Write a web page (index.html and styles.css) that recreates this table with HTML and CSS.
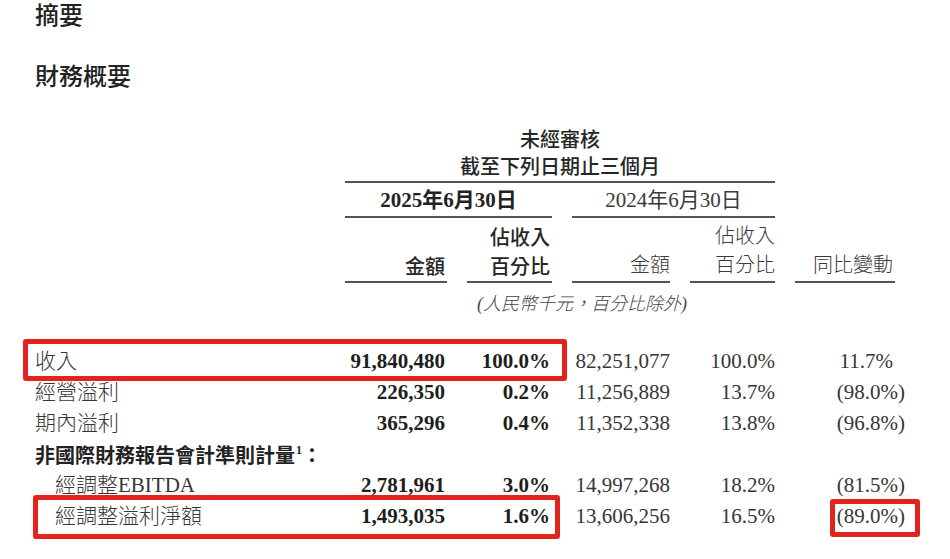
FILE: index.html
```html
<!DOCTYPE html>
<html lang="zh-Hant">
<head>
<meta charset="utf-8">
<title>摘要</title>
<link rel="stylesheet" href="styles.css">
</head>
<body>
<main class="page">
  <h1 class="title">摘要</h1>
  <h2 class="subtitle">財務概要</h2>
  <section class="fin">
    <div class="grid head-top">
      <div class="period">未經審核<br>截至下列日期止三個月</div>
    </div>
    <div class="grid head-date">
      <div class="date cur">2025年6月30日</div>
      <div class="date prev">2024年6月30日</div>
    </div>
    <div class="grid head-cols">
      <div class="blank"></div>
      <div class="hc cur">金額</div>
      <div class="hc cur">佔收入<br>百分比</div>
      <div class="hc prev">金額</div>
      <div class="hc prev">佔收入<br>百分比</div>
      <div class="hc prev yoy-h">同比變動</div>
    </div>
    <div class="grid head-note">
      <div class="note">(人民幣千元，百分比除外)</div>
    </div>
    <div class="body">
      <div class="grid row">
        <div class="label">收入</div>
        <div class="num cur b">91,840,480</div>
        <div class="num cur b">100.0%</div>
        <div class="num">82,251,077</div>
        <div class="num">100.0%</div>
        <div class="num yoy pos">11.7%</div>
        <span class="mark mark-revenue"></span>
      </div>
      <div class="grid row">
        <div class="label">經營溢利</div>
        <div class="num cur b">226,350</div>
        <div class="num cur b">0.2%</div>
        <div class="num">11,256,889</div>
        <div class="num">13.7%</div>
        <div class="num yoy">(98.0%)</div>
      </div>
      <div class="grid row">
        <div class="label">期內溢利</div>
        <div class="num cur b">365,296</div>
        <div class="num cur b">0.4%</div>
        <div class="num">11,352,338</div>
        <div class="num">13.8%</div>
        <div class="num yoy">(96.8%)</div>
      </div>
      <div class="grid row">
        <div class="label group">非國際財務報告會計準則計量<sup>1</sup>：</div>
      </div>
      <div class="grid row">
        <div class="label sub">經調整EBITDA</div>
        <div class="num cur b">2,781,961</div>
        <div class="num cur b">3.0%</div>
        <div class="num">14,997,268</div>
        <div class="num">18.2%</div>
        <div class="num yoy">(81.5%)</div>
      </div>
      <div class="grid row">
        <div class="label sub">經調整溢利淨額</div>
        <div class="num cur b">1,493,035</div>
        <div class="num cur b">1.6%</div>
        <div class="num">13,606,256</div>
        <div class="num">16.5%</div>
        <div class="num yoy">(89.0%)</div>
        <span class="mark mark-net"></span>
        <span class="mark mark-yoy"></span>
      </div>
    </div>
  </section>
</main>
</body>
</html>
```

FILE: styles.css
```css
* {
  box-sizing: border-box;
}

html,
body {
  margin: 0;
  background: #ffffff;
}

body {
  width: 950px;
  height: 559px;
  overflow: hidden;
  font-family: "Liberation Serif", "Noto Sans CJK TC", serif;
  color: #353535;
}

.page {
  padding-left: 35px;
}

.title,
.subtitle {
  margin: 0;
  font-family: "Noto Sans CJK TC", sans-serif;
  font-weight: 500;
  font-size: 24px;
  line-height: 28px;
  color: #222222;
}

.title {
  padding-top: 2px;
  line-height: 24px;
}

.subtitle {
  margin-top: 35px;
}

.fin {
  margin-top: 36px;
  font-size: 21px;
}

.grid {
  display: grid;
  grid-template-columns: 290px 102px 85px 98px 85px 110px;
  column-gap: 20px;
}

/* header */
.period {
  grid-column: 2 / 6;
  text-align: center;
  font-family: "Noto Sans CJK TC", sans-serif;
  font-weight: 500;
  font-size: 20px;
  line-height: 27px;
  padding-bottom: 2px;
  border-bottom: 2px solid #555555;
  color: #262626;
}

.date {
  text-align: center;
  padding-top: 2px;
  line-height: 31px;
  border-bottom: 2px solid #555555;
}

.date.cur {
  grid-column: 2 / 4;
  font-weight: bold;
  color: #222222;
}

.date.prev {
  grid-column: 4 / 6;
  font-weight: normal;
  color: #3a3a3a;
}

.head-cols {
  align-items: end;
}

.hc {
  text-align: right;
  font-size: 20px;
  line-height: 29px;
  padding-top: 4px;
  padding-bottom: 1px;
  border-bottom: 2px solid #555555;
}

.hc.cur {
  font-family: "Noto Sans CJK TC", sans-serif;
  font-weight: 500;
  padding-right: 2px;
  color: #262626;
}

.hc.prev {
  font-weight: 300;
  color: #3a3a3a;
}

.yoy-h {
  justify-self: start;
  width: 100px;
  padding-right: 2px;
}

.note {
  grid-column: 2 / 7;
  padding-left: 132px;
  padding-top: 9px;
  font-size: 18px;
  line-height: 24px;
  font-style: italic;
  font-weight: 300;
  color: #444444;
}

/* body rows */
.body {
  padding-top: 30px;
}

.row {
  position: relative;
  line-height: 31px;
}

.label {
  white-space: nowrap;
  font-weight: 300;
  color: #363636;
}

.label.group {
  font-family: "Noto Sans CJK TC", sans-serif;
  font-weight: 700;
  font-size: 20px;
  color: #222222;
}

.label.group sup {
  font-family: "Liberation Serif", serif;
  font-size: 12px;
  line-height: 0;
  vertical-align: 9px;
  margin-left: 1px;
}

.label.sub {
  padding-left: 20px;
}

.num {
  text-align: right;
  white-space: nowrap;
  color: #363636;
}

.num.cur {
  padding-right: 2px;
}

.num.b {
  font-weight: bold;
  color: #1e1e1e;
}

.num.yoy.pos {
  padding-right: 12px;
}

/* red annotation boxes laid over the table */
.mark {
  position: absolute;
  border: 5px solid #e3231e;
  border-radius: 3px;
  pointer-events: none;
}

.mark-revenue {
  left: -12px;
  top: -7px;
  width: 544px;
  height: 42px;
}

.mark-net {
  left: -2px;
  top: -6px;
  width: 527px;
  height: 44px;
}

.mark-yoy {
  left: 795px;
  top: -2px;
  width: 90px;
  height: 38px;
}
```
